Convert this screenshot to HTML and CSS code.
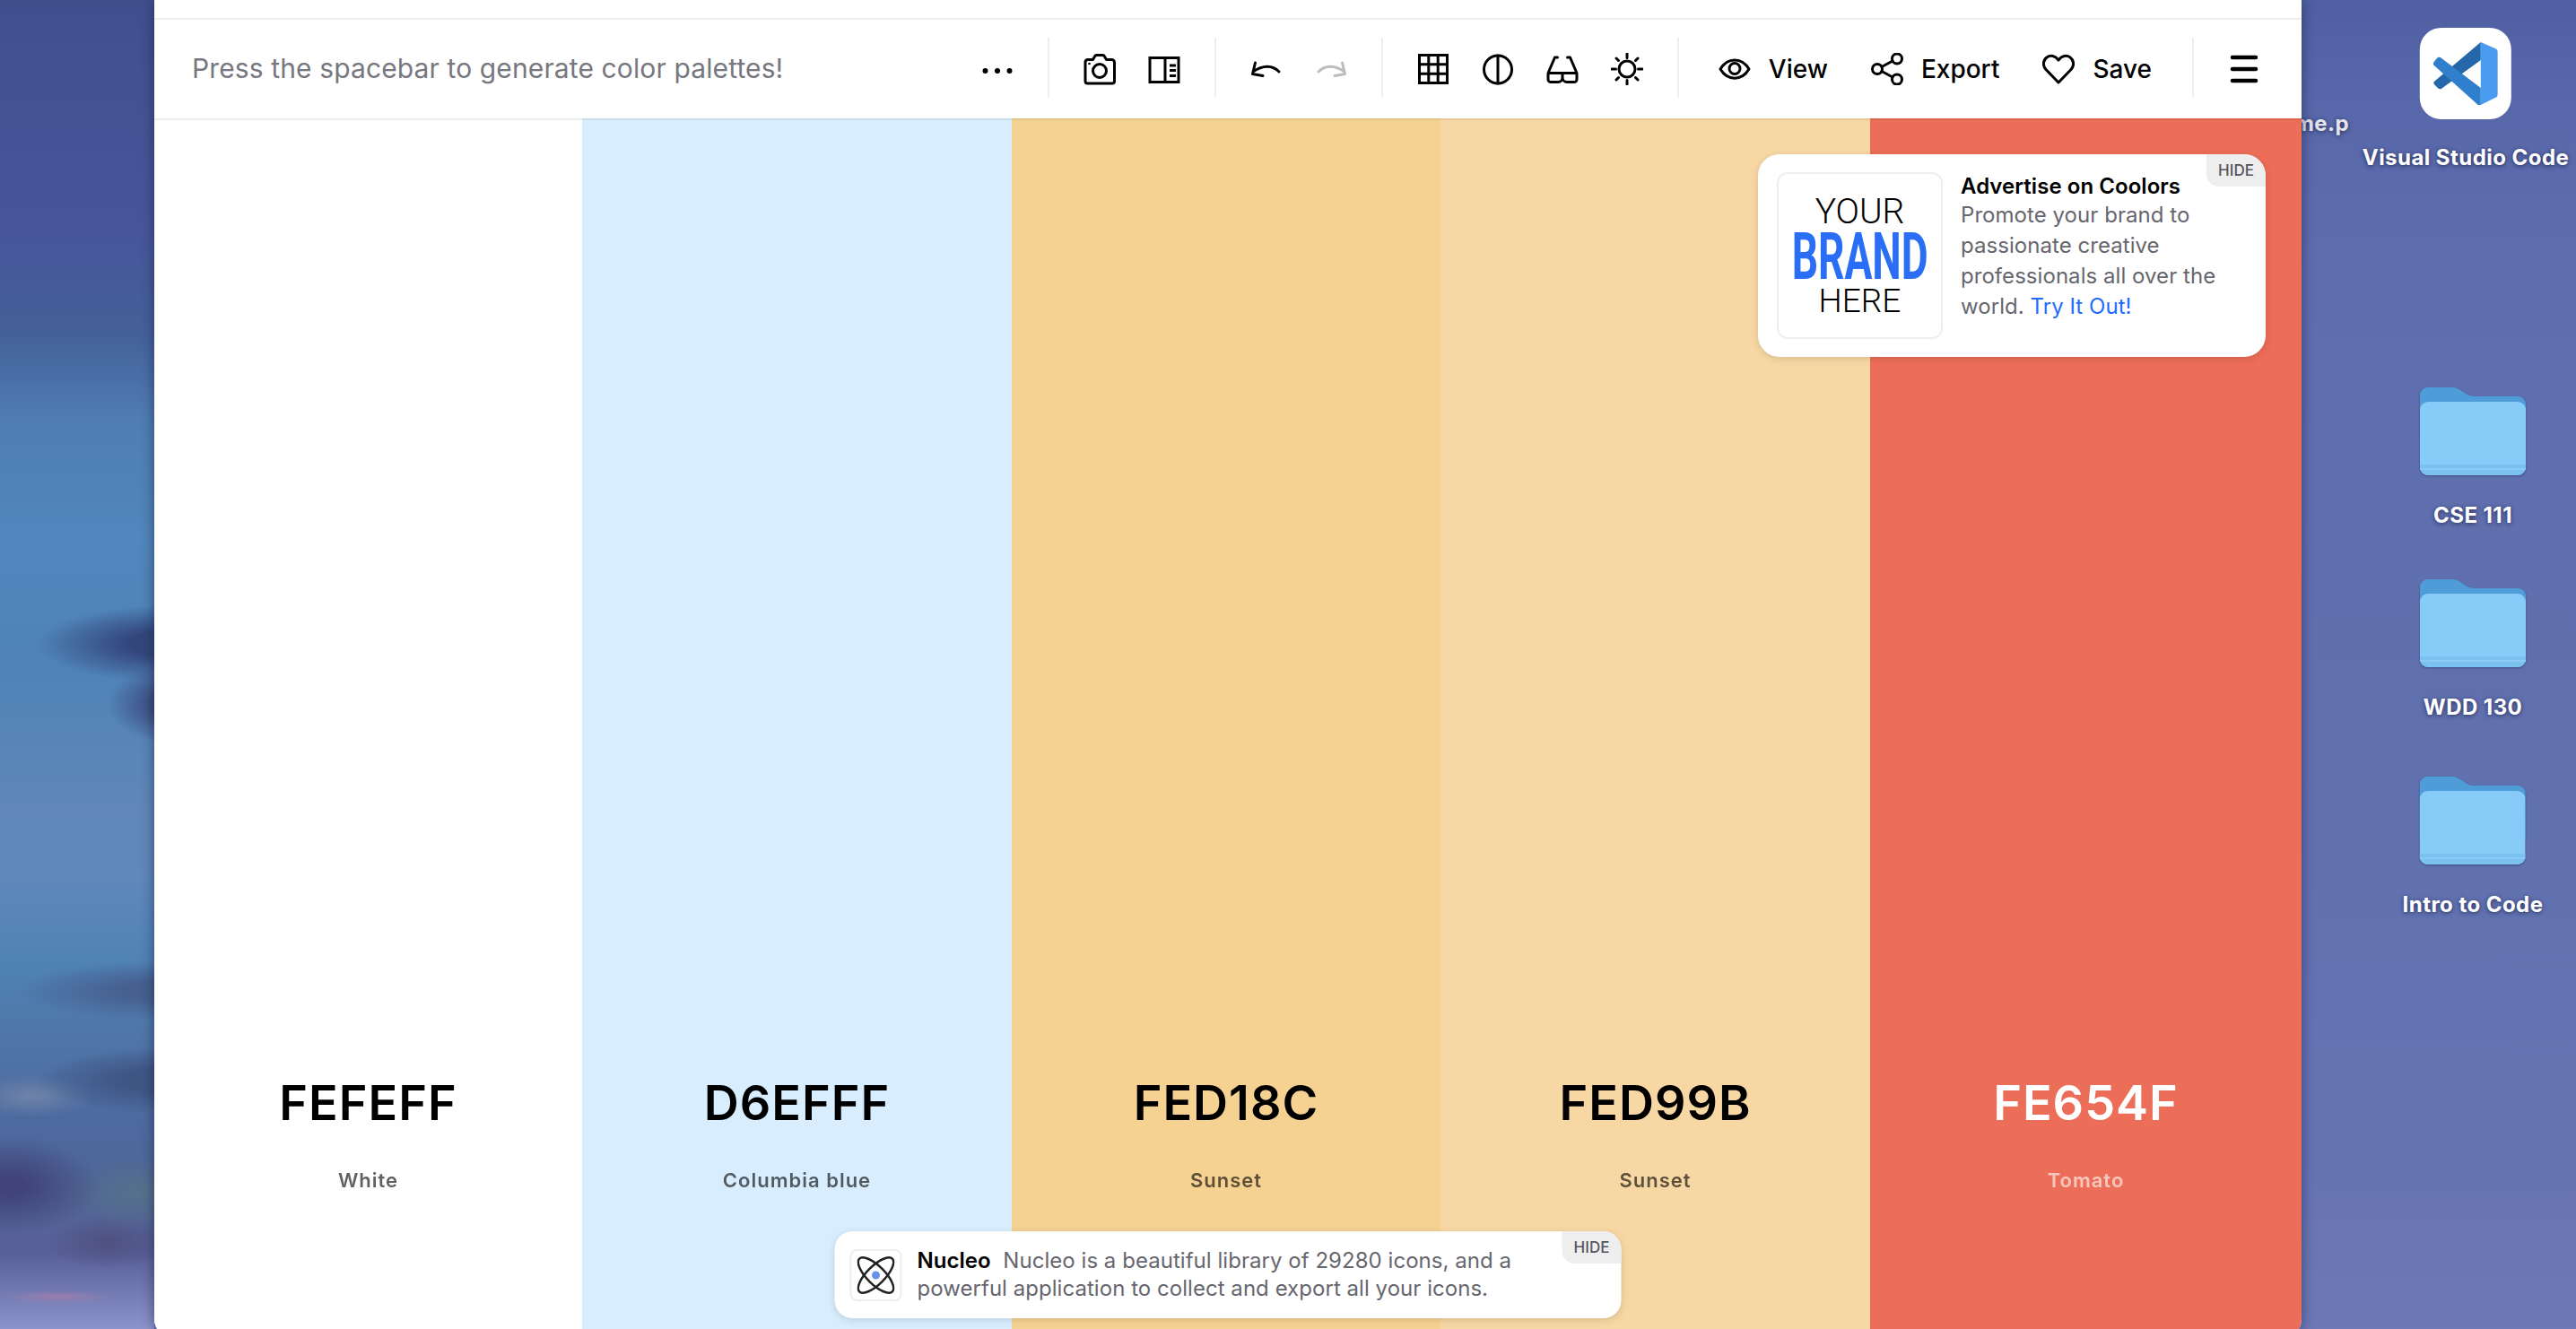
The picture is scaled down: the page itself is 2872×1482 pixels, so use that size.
FILE: index.html
```html
<!DOCTYPE html>
<html lang="en">
<head>
<meta charset="utf-8">
<title>Coolors</title>
<link rel="stylesheet" href="styles.css">
</head>
<body>
<svg class="defs" width="0" height="0" aria-hidden="true">
  <symbol id="folder" viewBox="0 0 118 98">
    <path d="M0 70V9a9 9 0 0 1 9-9h25c5 0 8 1 11 3l6 4c3 2 5 3 9 3h49a9 9 0 0 1 9 9v51z" fill="#4895d6"/>
    <path d="M0 24V9a9 9 0 0 1 9-9h25c5 0 8 1 11 3l6 4c3 2 5 3 9 3h49a9 9 0 0 1 9 9v5z" fill="#4e9dd8"/>
    <rect x="0" y="16" width="118" height="82" rx="9" fill="#87ccf9"/>
    <path d="M0 86h118v3a9 9 0 0 1-9 9H9a9 9 0 0 1-9-9z" fill="#7cc2f1"/>
    <rect x="0" y="90" width="118" height="2" fill="#8acaf4"/>
  </symbol>
</svg>

<div class="desk-icon vscode">
  <div class="vs-tile">
    <svg width="72" height="72" viewBox="0 0 72 72">
      <path d="M53 1V21L9 53Q7 54 5 52L1 48Q0 46 1 45Z" fill="#2567a8"/>
      <path d="M8 18L53 52V71H50L1 27Q-1 25 1 23L4 19Q6 17 8 18Z" fill="#2f7fcc"/>
      <path d="M53 1L69 8Q72 9 72 12V59Q72 62 69 63L53 71Z" fill="#4a9cf0"/>
    </svg>
  </div>
  <span class="desk-label">Visual Studio Code</span>
</div>
<span class="desk-label stray">me.p</span>
<div class="desk-icon f1"><svg class="folder" width="118" height="98"><use href="#folder"/></svg><span class="desk-label">CSE 111</span></div>
<div class="desk-icon f2"><svg class="folder" width="118" height="98"><use href="#folder"/></svg><span class="desk-label">WDD 130</span></div>
<div class="desk-icon f3"><svg class="folder" width="118" height="98"><use href="#folder"/></svg><span class="desk-label">Intro to Code</span></div>

<main class="window">
  <div class="top-strip"></div>
  <header class="toolbar">
    <p class="hint">Press the spacebar to generate color palettes!</p>

    <div class="group">
      <svg class="icon" width="36" height="36" viewBox="0 0 36 36"><circle cx="4.500" cy="20" r="3"/><circle cx="18" cy="20" r="3"/><circle cx="31.500" cy="20" r="3"/></svg>
    </div>

    <div class="group">
      <svg class="icon line" width="36" height="36" viewBox="0 0 36 36"><path d="M4.500 7.500h6l2-3.500c.5-1 1-1.500 2-1.500h7c1 0 1.500.5 2 1.500l2 3.500h6a3 3 0 0 1 3 3v21a2.500 2.500 0 0 1-2.500 2.500h-27.500a2.500 2.500 0 0 1-2.500-2.500v-21a3 3 0 0 1 2.500-3z"/><circle cx="18" cy="20" r="7.500"/><circle class="dot" cx="6.500" cy="12" r="1.300"/></svg>
      <svg class="icon line square" width="36" height="36" viewBox="0 0 36 36"><rect x="2" y="5.500" width="32" height="27"/><path d="M19 5.500v27M24 14h7M24 19.500h7M24 25.500h7"/></svg>
    </div>

    <div class="group">
      <svg class="icon line" width="36" height="36" viewBox="0 0 36 36"><path d="M32 21C25 13.500 14 13 3 21M5.500 11L2.500 23.500L14 25.500"/></svg>
      <svg class="icon line off" width="36" height="36" viewBox="0 0 36 36"><path d="M4 21C11 13.500 22 13 33 21M30.500 11L33.500 23.500L22 25.500"/></svg>
    </div>

    <div class="group">
      <svg class="icon line square" width="36" height="36" viewBox="0 0 36 36"><rect x="2.500" y="2.500" width="31" height="31"/><path d="M12.800 2.500v31M23.200 2.500v31M2.500 12.800h31M2.500 23.200h31"/></svg>
      <svg class="icon line" width="36" height="36" viewBox="0 0 36 36"><circle cx="18" cy="18.500" r="15.500"/><path d="M18 3v31"/></svg>
      <svg class="icon line" width="36" height="36" viewBox="0 0 36 36"><path d="M12.500 5H9.500L2 22.500M23.500 5h3L34 22.500M2 22.500h32M2 22.500v7a3 3 0 0 0 3 3h8a5 5 0 0 0 5-5v-5M18 27.500a5 5 0 0 0 5 5h8a3 3 0 0 0 3-3v-7"/></svg>
      <svg class="icon line" width="36" height="36" viewBox="0 0 36 36"><circle cx="18" cy="18" r="9"/><path d="M18 1v4.500M18 30.500v4.500M1 18h4.500M30.500 18h4.500M6 6l2.500 2.500M27.500 27.500l2.500 2.500M30 6l-2.500 2.500M8.500 27.500L6 30"/></svg>
    </div>

    <div class="group actions">
      <span class="action">
        <svg class="icon line" width="36" height="36" viewBox="0 0 36 36"><path d="M2 18C10 4.500 26 4.500 34 18C26 31.500 10 31.500 2 18Z"/><circle cx="18" cy="17.500" r="6"/></svg>
        View
      </span>
      <span class="action">
        <svg class="icon line" width="36" height="36" viewBox="0 0 36 36"><circle cx="7" cy="18" r="5.500"/><circle cx="29" cy="6.500" r="5.500"/><circle cx="29" cy="29.500" r="5.500"/><path d="M12 15.500L24 9M12 20.500L24 27"/></svg>
        Export
      </span>
      <span class="action">
        <svg class="icon line" width="36" height="36" viewBox="0 0 36 36"><path d="M18 33L4 18.500C0 14 .8 8 5 5c4-3 9.500-1.800 13 3C21.500 3.200 27 2 31 5c4.200 3 5 9 1 13.500Z"/></svg>
        Save
      </span>
    </div>

    <div class="group last">
      <svg class="icon burger" width="36" height="36" viewBox="0 0 36 36"><path d="M5 5h26M5 18h26M5 31h26"/></svg>
    </div>
  </header>

  <section class="palette">
    <div class="swatch c1"><h2 class="hex">FEFEFF</h2><p class="name">White</p></div>
    <div class="swatch c2"><h2 class="hex">D6EFFF</h2><p class="name">Columbia blue</p></div>
    <div class="swatch c3"><h2 class="hex">FED18C</h2><p class="name">Sunset</p></div>
    <div class="swatch c4"><h2 class="hex">FED99B</h2><p class="name">Sunset</p></div>
    <div class="swatch c5"><h2 class="hex">FE654F</h2><p class="name">Tomato</p></div>
  </section>

  <aside class="ad">
    <span class="hide">HIDE</span>
    <div class="brand">
      <span class="brand-thin your">YOUR</span>
      <span class="brand-big">BRAND</span>
      <span class="brand-thin">HERE</span>
    </div>
    <div class="ad-copy">
      <strong class="ad-title">Advertise on Coolors</strong>
      <p>Promote your brand to<br>passionate creative<br>professionals all over the<br>world. <a class="link">Try It Out!</a></p>
    </div>
  </aside>

  <aside class="nucleo">
    <span class="hide">HIDE</span>
    <div class="atom">
      <svg width="42" height="42" viewBox="0 0 42 42"><g fill="none" stroke="#222" stroke-width="2.500"><ellipse cx="21" cy="21" rx="26" ry="10" transform="rotate(45 21 21)"/><ellipse cx="21" cy="21" rx="26" ry="10" transform="rotate(-45 21 21)"/></g><circle cx="21" cy="21" r="4.500" fill="#6a90ee"/></svg>
    </div>
    <p class="nucleo-copy"><strong>Nucleo</strong> &nbsp;Nucleo is a beautiful library of 29280 icons, and a<br>powerful application to collect and export all your icons.</p>
  </aside>
</main>
</body>
</html>
```

FILE: styles.css
```css
* { box-sizing: border-box; }

html, body { margin: 0; height: 100%; }

body {
  position: relative;
  width: 2872px;
  height: 1482px;
  overflow: hidden;
  font-family: Inter, "Noto Sans", sans-serif;
  background:
    radial-gradient(ellipse 160px 44px at 200px 718px, #33467c 35%, rgba(51,70,124,0) 100%),
    radial-gradient(ellipse 80px 46px at 200px 785px, #3b4a7e 35%, rgba(59,74,126,0) 100%),
    radial-gradient(ellipse 170px 34px at 190px 1105px, #465f8e 30%, rgba(70,95,142,0) 100%),
    radial-gradient(ellipse 150px 38px at 190px 1205px, #3f5584 35%, rgba(63,85,132,0) 100%),
    radial-gradient(ellipse 70px 24px at 35px 1222px, #6f83a8 0%, rgba(111,131,168,0) 100%),
    radial-gradient(ellipse 100px 55px at 10px 1322px, #41447a 20%, rgba(65,68,122,0) 100%),
    radial-gradient(ellipse 90px 40px at 160px 1330px, #55708c 10%, rgba(85,112,140,0) 100%),
    radial-gradient(ellipse 70px 30px at 120px 1385px, #4f5282 10%, rgba(79,82,130,0) 100%),
    radial-gradient(ellipse 60px 7px at 65px 1446px, rgba(169,126,166,.7) 0%, rgba(169,126,166,0) 100%),
    linear-gradient(180deg, #4f5fa2 0, #5867a9 110px, #5e6dae 300px, #6070af 700px, #6272b1 1050px, #6673b3 1300px, #6e78b8 1482px) 172px 0 / 2700px 100% no-repeat,
    linear-gradient(180deg, #3f4f8e 0, #47569a 260px, #44609a 370px, #4f7db4 470px, #5087bc 600px, #4f83b8 750px, #6087b8 900px, #5f88bb 980px, #4f81b5 1080px, #4f77a8 1150px, #4d6a9f 1250px, #4f6596 1330px, #5a6099 1400px, #8d94cb 1482px) 0 0 / 172px 100% no-repeat;
}

.defs { position: absolute; }

/* desktop icons sit on a free canvas */
.desk-icon {
  position: absolute;
  display: flex;
  flex-direction: column;
  align-items: center;
  transform: translateX(-50%);
  white-space: nowrap;
}

.desk-label {
  color: #fff;
  font-size: 24px;
  font-weight: 700;
  line-height: 28px;
  letter-spacing: .45px;
  text-shadow: 0 1px 5px rgba(20,25,60,.75);
}

.vscode { left: 2749px; top: 31px; }
.f1 { left: 2757px; top: 432px; }
.f2 { left: 2757px; top: 646px; }
.f3 { left: 2757px; top: 866px; }

.folder { filter: drop-shadow(0 1px 1px rgba(20,30,70,.45)); margin-bottom: 31px; }

.vs-tile {
  width: 102px;
  height: 102px;
  margin-bottom: 29px;
  background: #fff;
  border-radius: 24px;
  display: flex;
  align-items: center;
  justify-content: center;
}

.stray {
  position: absolute;
  left: 2558px;
  top: 124px;
  color: #e3e4ec;
}

/* app window */
.window {
  position: relative;
  z-index: 2;
  display: flex;
  flex-direction: column;
  margin-left: 172px;
  width: 2394px;
  height: 1491px;
  background: #fff;
  border-radius: 0 0 20px 20px;
  overflow: hidden;
  box-shadow: 0 0 14px rgba(20,25,60,.55);
}

.top-strip {
  height: 22px;
  flex: none;
  border-bottom: 2px solid #eeeeee;
}

.toolbar {
  height: 110px;
  flex: none;
  display: flex;
  align-items: flex-start;
  padding: 20px 46px 0 42px;
}

.hint {
  margin: 0 auto 0 0;
  height: 67px;
  line-height: 69px;
  font-size: 30px;
  letter-spacing: .12px;
  color: #77777f;
}

.group {
  height: 67px;
  padding: 3px 38px 0;
  display: flex;
  align-items: center;
  gap: 36px;
  border-right: 2px solid #eeeeee;
}

.group.actions { gap: 48px; padding-left: 44px; padding-right: 45px; }
.group.last { border-right: 0; padding-right: 0; }

.icon { display: block; flex: none; }
.icon.line { fill: none; stroke: #000; stroke-width: 3; stroke-linejoin: round; stroke-linecap: round; }
.icon.square { stroke-linejoin: miter; stroke-linecap: butt; }
.icon.off { stroke: #bbbbc0; }
.icon .dot { fill: #000; stroke: none; }
.burger { fill: none; stroke: #000; stroke-width: 4.500; stroke-linecap: round; }

.action {
  display: flex;
  align-items: center;
  gap: 20px;
  font-size: 28px;
  font-weight: 500;
  color: #000;
}

/* palette */
.palette {
  flex: 1;
  display: grid;
  grid-template-columns: 477px 479px 478px 479px 481px;
}

.swatch {
  display: flex;
  flex-direction: column;
  align-items: center;
  justify-content: flex-end;
  padding-bottom: 160px;
  box-shadow: inset 0 2px 0 rgba(0,0,0,.07);
}

.c1 { background: #fefefe; color: #000; }
.c2 { background: #d8eefe; color: #000; }
.c3 { background: #f6d292; color: #000; }
.c4 { background: #f7d8a4; color: #000; }
.c5 { background: #ec6d58; color: #fff; }

.hex {
  margin: 0;
  font-size: 54px;
  line-height: 64px;
  font-weight: 600;
  letter-spacing: 1px;
}

.name {
  margin: 39px 0 0;
  font-size: 22px;
  line-height: 30px;
  font-weight: 600;
  letter-spacing: 1px;
  opacity: .62;
}

/* floating promos */
.ad, .nucleo {
  position: absolute;
  background: #fff;
  box-shadow: 0 2px 8px rgba(0,0,0,.13);
  display: flex;
}

.ad {
  top: 172px;
  right: 40px;
  width: 566px;
  height: 226px;
  padding: 20px 21px;
  gap: 20px;
  border-radius: 24px;
}

.nucleo {
  bottom: 21px;
  left: 50%;
  transform: translateX(-50%);
  width: 877px;
  height: 97px;
  padding: 20px 17px;
  gap: 17px;
  border-radius: 20px;
}

.hide {
  position: absolute;
  top: 0;
  right: 0;
  width: 66px;
  height: 36px;
  background: #eeeeee;
  color: #55555f;
  font-size: 17px;
  font-weight: 500;
  line-height: 36px;
  text-align: center;
  border-radius: 0 24px 0 14px;
}

.nucleo .hide { border-radius: 0 20px 0 14px; }

.brand {
  flex: none;
  width: 185px;
  height: 186px;
  border: 2px solid #eeeeee;
  border-radius: 12px;
  display: flex;
  flex-direction: column;
  align-items: center;
  padding-top: 20px;
  font-family: Roboto, sans-serif;
  color: #000;
}

.brand-thin {
  font-size: 37px;
  line-height: 44px;
  font-weight: 300;
}

.brand-thin.your { font-size: 39px; }

.brand-big {
  font-size: 73px;
  line-height: 56px;
  font-weight: 700;
  color: #2a6ef5;
  transform: scaleX(.63);
  margin: 0 -60px;
}

.ad-copy {
  margin-top: -1px;
  font-size: 24px;
  line-height: 34px;
  letter-spacing: .05px;
  color: #66666e;
}

.ad-title { display: block; margin-bottom: -2px; color: #000; font-weight: 600; }
.ad-copy p { margin: 0; }
.link { color: #1f6bff; }

.atom {
  flex: none;
  width: 58px;
  height: 58px;
  border: 2px solid #eeeeee;
  border-radius: 8px;
  display: flex;
  align-items: center;
  justify-content: center;
}

.nucleo-copy {
  margin: -3px 0 0;
  font-size: 24px;
  line-height: 31px;
  letter-spacing: .04px;
  color: #66666e;
  white-space: nowrap;
}

.nucleo-copy strong { color: #000; font-weight: 600; }
```
